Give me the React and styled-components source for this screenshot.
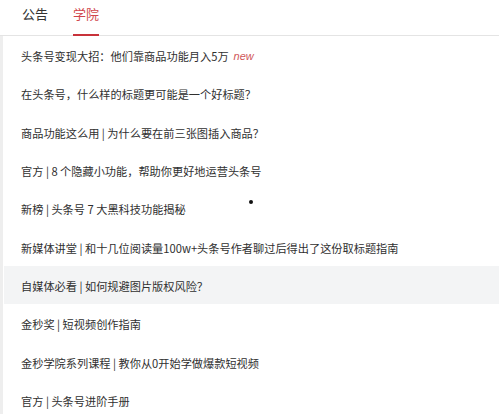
import styled, { createGlobalStyle } from "styled-components";

const GlobalStyle = createGlobalStyle`
  html, body {
    margin: 0;
    padding: 0;
    background: #fff;
  }
  body {
    font-family: "Microsoft YaHei", "Noto Sans CJK SC", "Liberation Sans", sans-serif;
  }
`;

const articles = [
  { title: "头条号变现大招：他们靠商品功能月入5万", isNew: true },
  { title: "在头条号，什么样的标题更可能是一个好标题？" },
  { title: "商品功能这么用 | 为什么要在前三张图插入商品？" },
  { title: "官方 | 8 个隐藏小功能，帮助你更好地运营头条号" },
  { title: "新榜 | 头条号 7 大黑科技功能揭秘", dot: true },
  { title: "新媒体讲堂 | 和十几位阅读量100w+头条号作者聊过后得出了这份取标题指南" },
  { title: "自媒体必看 | 如何规避图片版权风险？", hover: true },
  { title: "金秒奖 | 短视频创作指南" },
  { title: "金秒学院系列课程 | 教你从0开始学做爆款短视频" },
  { title: "官方 | 头条号进阶手册" },
];

function App() {
  return (
    <Page>
      <GlobalStyle />
      <Tabs>
        <Tab>公告</Tab>
        <Tab active>学院</Tab>
      </Tabs>
      <List>
        {articles.map((a) => (
          <Row key={a.title} hover={a.hover}>
            <Title>{a.title}</Title>
            {a.isNew && <NewTag>new</NewTag>}
            {a.dot && <Dot />}
          </Row>
        ))}
      </List>
    </Page>
  );
}

const Page = styled.div`
  width: 499px;
  height: 414px;
  overflow: hidden;
`;

const Tabs = styled.div`
  display: flex;
  gap: 25px;
  height: 35px;
  padding-left: 22px;
  border-bottom: 1px solid #e4e4e4;
`;

const Tab = styled.div`
  position: relative;
  display: flex;
  align-items: center;
  height: 100%;
  padding-bottom: 9px;
  box-sizing: border-box;
  font-size: 13px;
  color: ${(p) => (p.active ? "#d0464b" : "#333")};
  &::after {
    content: "";
    display: ${(p) => (p.active ? "block" : "none")};
    position: absolute;
    left: 0;
    right: 0;
    bottom: -1px;
    height: 2px;
    background: #c8323a;
  }
`;

const List = styled.div`
  border-left: 3px solid #eeeeee;
  padding-left: 1px;
  height: 378px;
`;

const Row = styled.div`
  position: relative;
  display: flex;
  align-items: center;
  height: 38.3px;
  padding-left: 17px;
  padding-top: 2px;
  box-sizing: border-box;
  background: ${(p) => (p.hover ? "#f3f4f5" : "transparent")};
`;

const Title = styled.span`
  font-size: 11.2px;
  color: #303030;
  white-space: nowrap;
`;

const NewTag = styled.span`
  margin-left: 5px;
  font-family: "Liberation Sans", Arial, sans-serif;
  font-style: italic;
  font-size: 11px;
  color: #d0575a;
`;

const Dot = styled.span`
  position: absolute;
  left: 245px;
  top: 11px;
  width: 4px;
  height: 4px;
  border-radius: 50%;
  background: #111;
`;

export default App;
